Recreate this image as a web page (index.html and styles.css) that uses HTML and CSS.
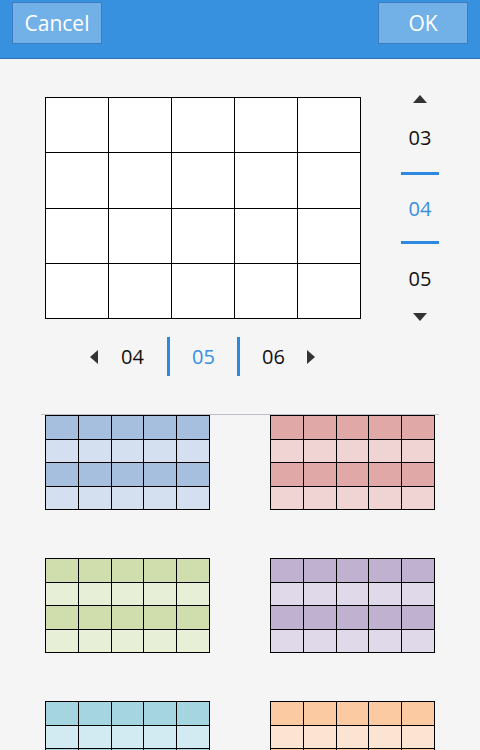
FILE: index.html
```html
<!DOCTYPE html>
<html lang="en">
<head>
    <meta charset="UTF-8">
    <meta name="viewport" content="width=device-width, initial-scale=1.0">
    <title>Table picker</title>
    <link rel="stylesheet" href="styles.css">
</head>
<body>
    <header class="topbar">
        <button class="btn">Cancel</button>
        <button class="btn">OK</button>
    </header>

    <main>
        <div class="picker-row">
            <div class="preview">
                <div></div><div></div><div></div><div></div><div></div>
                <div></div><div></div><div></div><div></div><div></div>
                <div></div><div></div><div></div><div></div><div></div>
                <div></div><div></div><div></div><div></div><div></div>
            </div>

            <div class="vpicker">
                <div class="arrow arrow-up"></div>
                <div class="vitem vitem-edge">03</div>
                <div class="vline"></div>
                <div class="vitem selected">04</div>
                <div class="vline"></div>
                <div class="vitem vitem-edge">05</div>
                <div class="arrow arrow-down"></div>
            </div>
        </div>

        <div class="hpicker">
            <div class="arrow arrow-left"></div>
            <div class="hitem first">04</div>
            <div class="hline"></div>
            <div class="hitem selected">05</div>
            <div class="hline"></div>
            <div class="hitem">06</div>
            <div class="arrow arrow-right"></div>
        </div>

        <section class="styles">
            <div class="mini blue"></div>
            <div class="mini red"></div>
            <div class="mini green"></div>
            <div class="mini purple"></div>
            <div class="mini cyan"></div>
            <div class="mini orange"></div>
        </section>
    </main>

    <script src="script.js"></script>
</body>
</html>
```

FILE: script.js
```js
// fill each style swatch with a 5x4 grid of cells
let minis = document.querySelectorAll(".mini");
minis.forEach(function (mini) {
  for (let i = 0; i < 20; i++) {
    let cell = document.createElement("div");
    mini.appendChild(cell);
  }
});
```

FILE: styles.css
```css
body {
  margin: 0;
  background: #f5f5f5;
  font-family: "Open Sans", "DejaVu Sans", sans-serif;
  height: 750px;
  overflow: hidden;
}

.topbar {
  height: 56px;
  padding: 2px 12px 0 12px;
  background: #3891de;
  border-bottom: 1px solid #2b6eb2;
  display: flex;
  justify-content: space-between;
  align-items: flex-start;
}

.btn {
  width: 90px;
  height: 42px;
  background: #72b1e8;
  border: 1px solid #3e7cbd;
  color: #fff;
  font-family: inherit;
  font-size: 21px;
  padding: 0;
}

main {
  padding-top: 38px;
}

.picker-row {
  display: flex;
  align-items: flex-start;
  padding-left: 45px;
}

.preview {
  width: 316px;
  height: 222px;
  box-sizing: border-box;
  padding: 1px;
  background: #000;
  display: grid;
  grid-template-columns: repeat(5, 1fr);
  grid-template-rows: repeat(4, 1fr);
  gap: 1px;
}

.preview div {
  background: #fff;
}

.vpicker {
  width: 38px;
  margin-left: 40px;
  margin-top: -2px;
  display: flex;
  flex-direction: column;
  align-items: center;
}

.vitem {
  height: 66px;
  width: 100%;
  display: flex;
  align-items: center;
  justify-content: center;
  font-size: 20px;
  color: #111;
}

.vitem-edge {
  height: 69px;
}

.vline {
  width: 38px;
  height: 3px;
  background: #2d88e0;
}

.selected {
  color: #3a8ee0;
}

.arrow {
  width: 0;
  height: 0;
}

.arrow-up {
  border-left: 7px solid transparent;
  border-right: 7px solid transparent;
  border-bottom: 8px solid #333;
}

.arrow-down {
  border-left: 7px solid transparent;
  border-right: 7px solid transparent;
  border-top: 8px solid #333;
}

.arrow-left {
  border-top: 7px solid transparent;
  border-bottom: 7px solid transparent;
  border-right: 8px solid #333;
}

.arrow-right {
  border-top: 7px solid transparent;
  border-bottom: 7px solid transparent;
  border-left: 8px solid #333;
}

.hpicker {
  display: flex;
  align-items: center;
  padding-left: 90px;
  margin-top: 16px;
  height: 39px;
}

.hitem {
  width: 67px;
  text-align: center;
  font-size: 20px;
  color: #111;
}

.hitem.first {
  width: 69px;
}

.hitem.selected {
  color: #3a8ee0;
}

.hline {
  width: 3px;
  height: 39px;
  background: #2d88e0;
}

.styles {
  margin: 38px 41px 0 41px;
  padding: 0 4px;
  border-top: 1px solid #bcc0c8;
  display: grid;
  grid-template-columns: 165px 165px;
  justify-content: space-between;
  row-gap: 48px;
}

.mini {
  height: 95px;
  box-sizing: border-box;
  padding: 1px;
  background: #000;
  display: grid;
  grid-template-columns: repeat(5, 1fr);
  grid-template-rows: repeat(4, 1fr);
  gap: 1px;
}

.blue div { background: #d4dff0; }
.blue div:nth-child(-n+5),
.blue div:nth-child(n+11):nth-child(-n+15) { background: #a6bfdf; }

.red div { background: #f0d3d3; }
.red div:nth-child(-n+5),
.red div:nth-child(n+11):nth-child(-n+15) { background: #e0a9a8; }

.green div { background: #e7efd7; }
.green div:nth-child(-n+5),
.green div:nth-child(n+11):nth-child(-n+15) { background: #cfdeac; }

.purple div { background: #dfd9e9; }
.purple div:nth-child(-n+5),
.purple div:nth-child(n+11):nth-child(-n+15) { background: #c0b1d1; }

.cyan div { background: #d2eaf2; }
.cyan div:nth-child(-n+5),
.cyan div:nth-child(n+11):nth-child(-n+15) { background: #a6d5e2; }

.orange div { background: #fde3d1; }
.orange div:nth-child(-n+5),
.orange div:nth-child(n+11):nth-child(-n+15) { background: #fbcaa2; }
```
